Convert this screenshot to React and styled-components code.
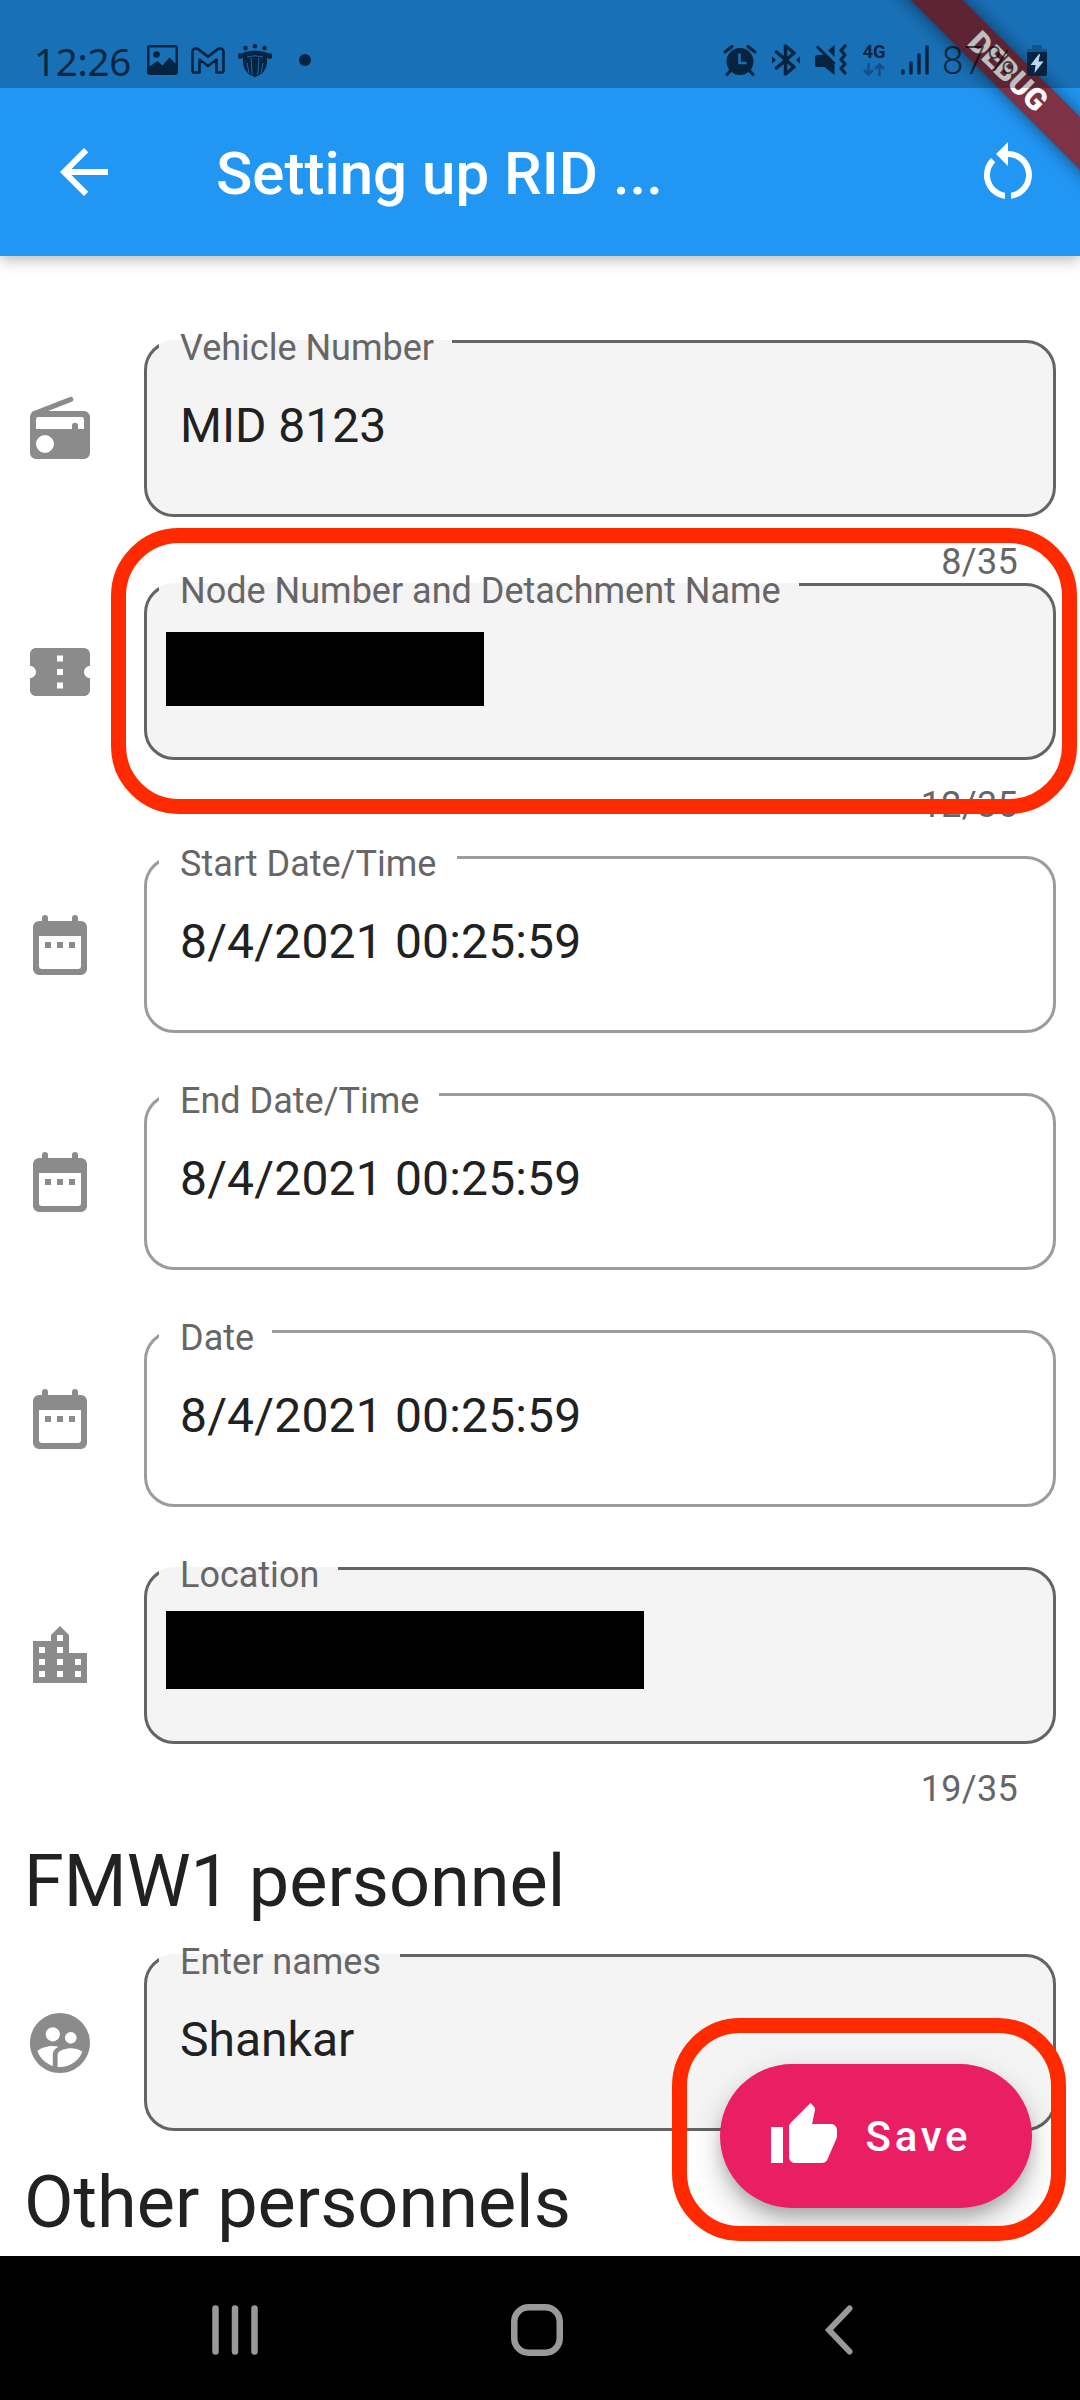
import React from "react";
import styled, { createGlobalStyle } from "styled-components";
import {
  MdArrowBack,
  MdRestartAlt,
  MdConfirmationNumber,
  MdLocationCity,
  MdSupervisedUserCircle,
  MdThumbUp,
} from "react-icons/md";

const GlobalStyle = createGlobalStyle`
  body {
    margin: 0;
    background: #fff;
    font-family: Roboto, "Liberation Sans", sans-serif;
  }
  *, *::before, *::after { box-sizing: border-box; }
  svg { display: block; flex: none; }
`;

const INK = "#06233f";

const Screen = styled.div`
  position: relative;
  display: flex;
  flex-direction: column;
  width: 1080px;
  height: 2400px;
  overflow: hidden;
  background: #fff;
`;

/* App bar */
const AppBar = styled.header`
  display: flex;
  align-items: center;
  flex: none;
  height: 256px;
  padding: 88px 36px 0 48px;
  background: #2196f3;
  color: #fff;
  box-shadow: 0 3px 12px rgba(0, 0, 0, 0.2), 0 8px 14px rgba(0, 0, 0, 0.08);
`;

const Title = styled.h1`
  flex: 1;
  margin: 3px 0 0 96px;
  font-size: 60px;
  font-weight: 500;
  line-height: 70px;
`;

/* Status bar, laid over the app bar and the banner */
const StatusBar = styled.div`
  position: absolute;
  inset: 0 0 auto 0;
  display: flex;
  justify-content: space-between;
  align-items: flex-start;
  height: 88px;
  padding: 44px 33px 0 34px;
  background: rgba(0, 0, 0, 0.25);
  color: rgba(0, 0, 0, 0.68);
`;

const StatusGroup = styled.div`
  display: flex;
  align-items: center;
  height: 32px;
  gap: ${(p) => p.$gap}px;
`;

const StatusText = styled.span`
  width: ${(p) => p.$width}px;
  font-family: "Noto Sans", sans-serif;
  font-size: 38.5px;
  font-weight: 400;
  letter-spacing: ${(p) => p.$spacing}px;
  line-height: 32px;
  white-space: nowrap;
  padding-top: 2px;
`;

const BatteryText = styled(StatusText)`
  font-family: Roboto, sans-serif;
  font-weight: 300;
  text-indent: -2px;
`;

const Network = styled.div`
  display: flex;
  flex-direction: column;
  align-items: center;
  width: 24px;
  gap: 3px;
`;

const NetworkText = styled.span`
  font-size: 18.5px;
  font-weight: 700;
  line-height: 16px;
`;

const Dot = styled.span`
  width: 12px;
  height: 12px;
  margin-left: 14px;
  border-radius: 50%;
  background: ${INK};
`;

const Banner = styled.div`
  position: absolute;
  top: 53px;
  left: 848px;
  width: 320px;
  height: 37px;
  transform: rotate(45deg);
  background: #7d3246;
  box-shadow: 0 0 18px rgba(0, 0, 0, 0.5);
  color: #fff;
  font-size: 30.6px;
  font-weight: 900;
  line-height: 37px;
  text-align: center;
`;

/* Form */
const Form = styled.main`
  display: flex;
  flex-direction: column;
  flex: 1;
  min-height: 0;
  overflow: hidden;
  padding: 84px 24px 0;
`;

const Row = styled.div`
  display: grid;
  grid-template-columns: 72px 1fr;
  column-gap: 48px;
  align-items: center;
  margin-bottom: ${(p) => p.$after}px;
  color: #8b8b8b;
`;

const Field = styled.div`
  position: relative;
  height: 177px;
  padding-left: 36px;
  border-radius: 30px;
  background: ${(p) => (p.$filled ? "#f4f4f4" : "transparent")};
`;

/* Outline with a break in its top edge for the floating label */
const Outline = styled.div`
  position: absolute;
  inset: 0;
  border: 3px solid ${(p) => (p.$filled ? "#646464" : "#9c9c9c")};
  border-radius: 30px;
  clip-path: polygon(
    0 0, 15px 0, 15px 10px, ${(p) => p.$notch}px 10px, ${(p) => p.$notch}px 0,
    100% 0, 100% 100%, 0 100%
  );
`;

const Label = styled.label`
  position: absolute;
  top: -13px;
  left: 36px;
  color: #666;
  font-size: 36px;
  line-height: 42px;
  white-space: nowrap;
`;

const Value = styled.div`
  padding-top: 58px;
  color: #212121;
  font-size: 48px;
  line-height: 56px;
  letter-spacing: ${(p) => (p.$numeric ? "0.17px" : "normal")};
`;

const Redacted = styled.div`
  width: ${(p) => p.$width}px;
  height: ${(p) => p.$height}px;
  margin-left: -14px;
  transform: translateY(${(p) => p.$top}px);
  background: #000;
`;

const Counter = styled.div`
  grid-column: 2;
  padding: 24px 38px 0 0;
  color: #666;
  font-size: 36px;
  line-height: 42px;
  letter-spacing: 0.3px;
  text-align: right;
`;

const Heading = styled.h2`
  margin: 0;
  padding: 30px 0 30px;
  color: #212121;
  font-size: 72px;
  font-weight: 400;
  line-height: 84px;
`;

const SaveButton = styled.button`
  position: absolute;
  top: 2064px;
  left: 720px;
  display: flex;
  align-items: center;
  gap: 25.5px;
  width: 312px;
  height: 144px;
  padding: 0 0 0 48px;
  border: 0;
  border-radius: 72px;
  background: #e91e63;
  color: #fff;
  font-family: inherit;
  font-size: 42px;
  font-weight: 500;
  letter-spacing: 3.75px;
  box-shadow: 0 9px 15px -3px rgba(0, 0, 0, 0.2), 0 18px 30px rgba(0, 0, 0, 0.17),
    0 3px 36px rgba(0, 0, 0, 0.06);
`;

const Highlight = styled.div`
  position: absolute;
  top: ${(p) => p.$top}px;
  left: ${(p) => p.$left}px;
  width: ${(p) => p.$width}px;
  height: ${(p) => p.$height}px;
  border: 15px solid #ff2a00;
  border-radius: 68px;
`;

const NavBar = styled.nav`
  display: grid;
  grid-template-columns: repeat(3, 60px);
  column-gap: 242px;
  align-items: center;
  flex: none;
  height: 144px;
  padding: 4px 0 0 205px;
  background: #000;
`;

/* Icons */
const RadioIcon = () => (
  <svg width="72" height="72" viewBox="0 0 24 24" fill="currentColor">
    <path
      fillRule="evenodd"
      d="M4 6h16a2 2 0 0 1 2 2v12a2 2 0 0 1-2 2H4a2 2 0 0 1-2-2V8a2 2 0 0 1 2-2zM4 12h12v-1.1a1 1 0 0 1 2 0V12h2V8.8a.8.8 0 0 0-.8-.8H4.8a.8.8 0 0 0-.8.8zM7 14a3 3 0 1 0 0 6 3 3 0 0 0 0-6z"
    />
    <path d="M3.4 6.9 15.6 2.1" stroke="currentColor" strokeWidth="1.7" strokeLinecap="round" />
  </svg>
);

const CalendarIcon = () => (
  <svg width="72" height="72" viewBox="0 0 24 24" fill="currentColor">
    <path
      fillRule="evenodd"
      d="M6 3a1 1 0 0 1 2 0v1h8V3a1 1 0 0 1 2 0v1h1a2 2 0 0 1 2 2v14a2 2 0 0 1-2 2H5a2 2 0 0 1-2-2V6a2 2 0 0 1 2-2h1zM5 9v10.200a.8.8 0 0 0 .8.8h12.400a.8.8 0 0 0 .8-.8V9z"
    />
    <path d="M7 11h2v2H7zM11 11h2v2h-2zM15 11h2v2h-2z" />
  </svg>
);

const PhotoIcon = () => (
  <svg width="31" height="30" viewBox="0 0 31 30" fill={INK}>
    <path
      fillRule="evenodd"
      d="M3 0h25a3 3 0 0 1 3 3v24a3 3 0 0 1-3 3H3a3 3 0 0 1-3-3V3a3 3 0 0 1 3-3zM2.500 2.500v19L10.500 16l5 4.500 7-8 6 6V2.500z"
    />
    <circle cx="9.500" cy="9.500" r="3.300" />
  </svg>
);

const MailIcon = () => (
  <svg width="34" height="27" viewBox="0 0 34 27" fill="none" stroke={INK} strokeWidth="2.600">
    <path
      d="M1.500 5v18.500a2 2 0 0 0 2 2H8.500V12.500L17 19l8.500-6.500v13h5a2 2 0 0 0 2-2V5c0-3.200-3.400-4.600-6-2.600L17 9.600 7.500 2.400C4.900.4 1.500 1.800 1.500 5z"
      strokeLinejoin="round"
    />
  </svg>
);

const CrestIcon = () => (
  <svg width="34" height="33" viewBox="0 0 34 33" fill={INK}>
    <circle cx="7.500" cy="4" r="2.200" />
    <circle cx="17" cy="2.300" r="2.200" />
    <circle cx="26.500" cy="4" r="2.200" />
    <circle cx="2.200" cy="12" r="2.700" />
    <circle cx="31.800" cy="12" r="2.700" />
    <path d="M3 10C8 5.500 26 5.500 31 10l-2 4.500C30 24 25 31 17 33 9 31 4 24 5 14.500z" />
    <path
      d="M9 13q8-2.500 16 0M13 14l1.200 17M21 14l-1.200 17M9 19l2 10M25 19l-2 10"
      stroke="#1970b6"
      strokeWidth="0.900"
      fill="none"
    />
  </svg>
);

const AlarmIcon = () => (
  <svg width="34" height="31" viewBox="0 0 34 31">
    <path
      d="M2 7l7-5.500M32 7l-7-5.500M8 25l-4 4.500M26 25l4 4.500"
      stroke={INK}
      strokeWidth="3"
      strokeLinecap="round"
    />
    <circle cx="17" cy="16.500" r="13.500" fill={INK} />
    <path d="M16.500 8.500v9.500h7" stroke="#1970b6" strokeWidth="2.600" fill="none" />
  </svg>
);

const BluetoothIcon = () => (
  <svg width="28" height="32" viewBox="0 0 28 32">
    <path
      d="M4.500 8 22 23l-8.500 7V2L22 9 4.500 24"
      stroke={INK}
      strokeWidth="3.500"
      fill="none"
      strokeLinejoin="round"
      strokeLinecap="round"
    />
    <path d="M0 12.500 4 16l-4 3.500zM28 12.500 24 16l4 3.500z" fill={INK} />
  </svg>
);

const MuteIcon = () => (
  <svg width="32" height="32" viewBox="0 0 32 32">
    <path d="M0 13a2 2 0 0 1 2-2h7l10.500 9.500V31L9.500 23H2a2 2 0 0 1-2-2zM19.500 1v12L13 6.500z" fill={INK} />
    <path d="M2 2.500 19.500 20" stroke={INK} strokeWidth="3" />
    <path
      d="M30 2l-4 4.500 4 4.500-4 4.500 4 4.500-4 4.500 4 4.500"
      stroke={INK}
      strokeWidth="3.200"
      fill="none"
      strokeLinecap="round"
      strokeLinejoin="round"
    />
  </svg>
);

const DataArrows = () => (
  <svg width="22" height="13" viewBox="0 0 22 13" fill="none" stroke="#12508a" strokeWidth="2.600">
    <path d="M5.500 0v11M1 7l4.500 4.500L10 7M16.500 13V2M12 6l4.500-4.500L21 6" />
  </svg>
);

const SignalIcon = () => (
  <svg width="28" height="30" viewBox="0 0 28 30" stroke={INK} strokeWidth="3.400" strokeLinecap="round">
    <path d="M2 26v2M10 18v10M18 10v18M26 2v26" />
  </svg>
);

const BatteryIcon = () => (
  <svg width="20" height="31" viewBox="0 0 20 31">
    <path d="M5 0h10v4h5v4H0V4h5z" fill="#125490" />
    <path d="M0 7h20v22a2 2 0 0 1-2 2H2a2 2 0 0 1-2-2z" fill={INK} />
    <path d="M12 9 3.500 20h5L7.500 28 16.500 16.500h-5L13 9z" fill="#bcd9f2" />
  </svg>
);

const RecentsIcon = () => (
  <svg width="60" height="60" viewBox="0 0 60 60" stroke="#999" strokeWidth="6.500" strokeLinecap="round">
    <path d="M10.500 8.500v43M30 8.500v43M49.500 8.500v43" />
  </svg>
);

const HomeIcon = () => (
  <svg width="60" height="60" viewBox="0 0 60 60" fill="none" stroke="#999" strokeWidth="6.500">
    <rect x="7.250" y="7.250" width="45.500" height="45.500" rx="14.500" />
  </svg>
);

const BackIcon = () => (
  <svg width="60" height="60" viewBox="0 0 60 60" fill="none" stroke="#999" strokeWidth="6" strokeLinecap="round">
    <path d="M40.500 8.500 20 30l20.500 21.500" />
  </svg>
);

const FormField = ({ icon, label, notch, filled, counter, after = 0, children }) => (
  <Row $after={after}>
    {icon}
    <Field $filled={filled}>
      <Outline $filled={filled} $notch={notch} />
      <Label>{label}</Label>
      {children}
    </Field>
    {counter && <Counter>{counter}</Counter>}
  </Row>
);

export default function App() {
  return (
    <>
      <GlobalStyle />
      <Screen>
        <AppBar>
          <MdArrowBack size={72} />
          <Title>Setting up RID ...</Title>
          <MdRestartAlt size={72} />
        </AppBar>

        <Form>
          <FormField icon={<RadioIcon />} label="Vehicle Number" notch={308} filled counter="8/35">
            <Value>MID 8123</Value>
          </FormField>
          <FormField
            icon={<MdConfirmationNumber size={72} />}
            label="Node Number and Detachment Name"
            notch={655}
            filled
            counter="12/35"
            after={30}
          >
            <Redacted $top={49} $width={318} $height={74} />
          </FormField>
          <FormField icon={<CalendarIcon />} label="Start Date/Time" notch={313} after={60}>
            <Value $numeric>8/4/2021 00:25:59</Value>
          </FormField>
          <FormField icon={<CalendarIcon />} label="End Date/Time" notch={295} after={60}>
            <Value $numeric>8/4/2021 00:25:59</Value>
          </FormField>
          <FormField icon={<CalendarIcon />} label="Date" notch={128} after={60}>
            <Value $numeric>8/4/2021 00:25:59</Value>
          </FormField>
          <FormField
            icon={<MdLocationCity size={72} />}
            label="Location"
            notch={194}
            filled
            counter="19/35"
          >
            <Redacted $top={44} $width={478} $height={78} />
          </FormField>
          <Heading>FMW1 personnel</Heading>
          <FormField icon={<MdSupervisedUserCircle size={72} />} label="Enter names" notch={256} filled>
            <Value>Shankar</Value>
          </FormField>
          <Heading>Other personnels</Heading>
        </Form>

        <SaveButton>
          <MdThumbUp size={72} />
          Save
        </SaveButton>

        <Highlight $top={528} $left={111} $width={966} $height={286} />
        <Highlight $top={2018} $left={672} $width={394} $height={223} />

        <NavBar>
          <RecentsIcon />
          <HomeIcon />
          <BackIcon />
        </NavBar>

        <Banner>DEBUG</Banner>
        <StatusBar>
          <StatusGroup $gap={13}>
            <StatusText $width={100} $spacing={-0.3}>12:26</StatusText>
            <PhotoIcon />
            <MailIcon />
            <CrestIcon />
            <Dot />
          </StatusGroup>
          <StatusGroup $gap={15}>
            <AlarmIcon />
            <BluetoothIcon />
            <MuteIcon />
            <Network>
              <NetworkText>4G</NetworkText>
              <DataArrows />
            </Network>
            <SignalIcon />
            <BatteryText $width={68} $spacing={1}>87%</BatteryText>
            <BatteryIcon />
          </StatusGroup>
        </StatusBar>
      </Screen>
    </>
  );
}
